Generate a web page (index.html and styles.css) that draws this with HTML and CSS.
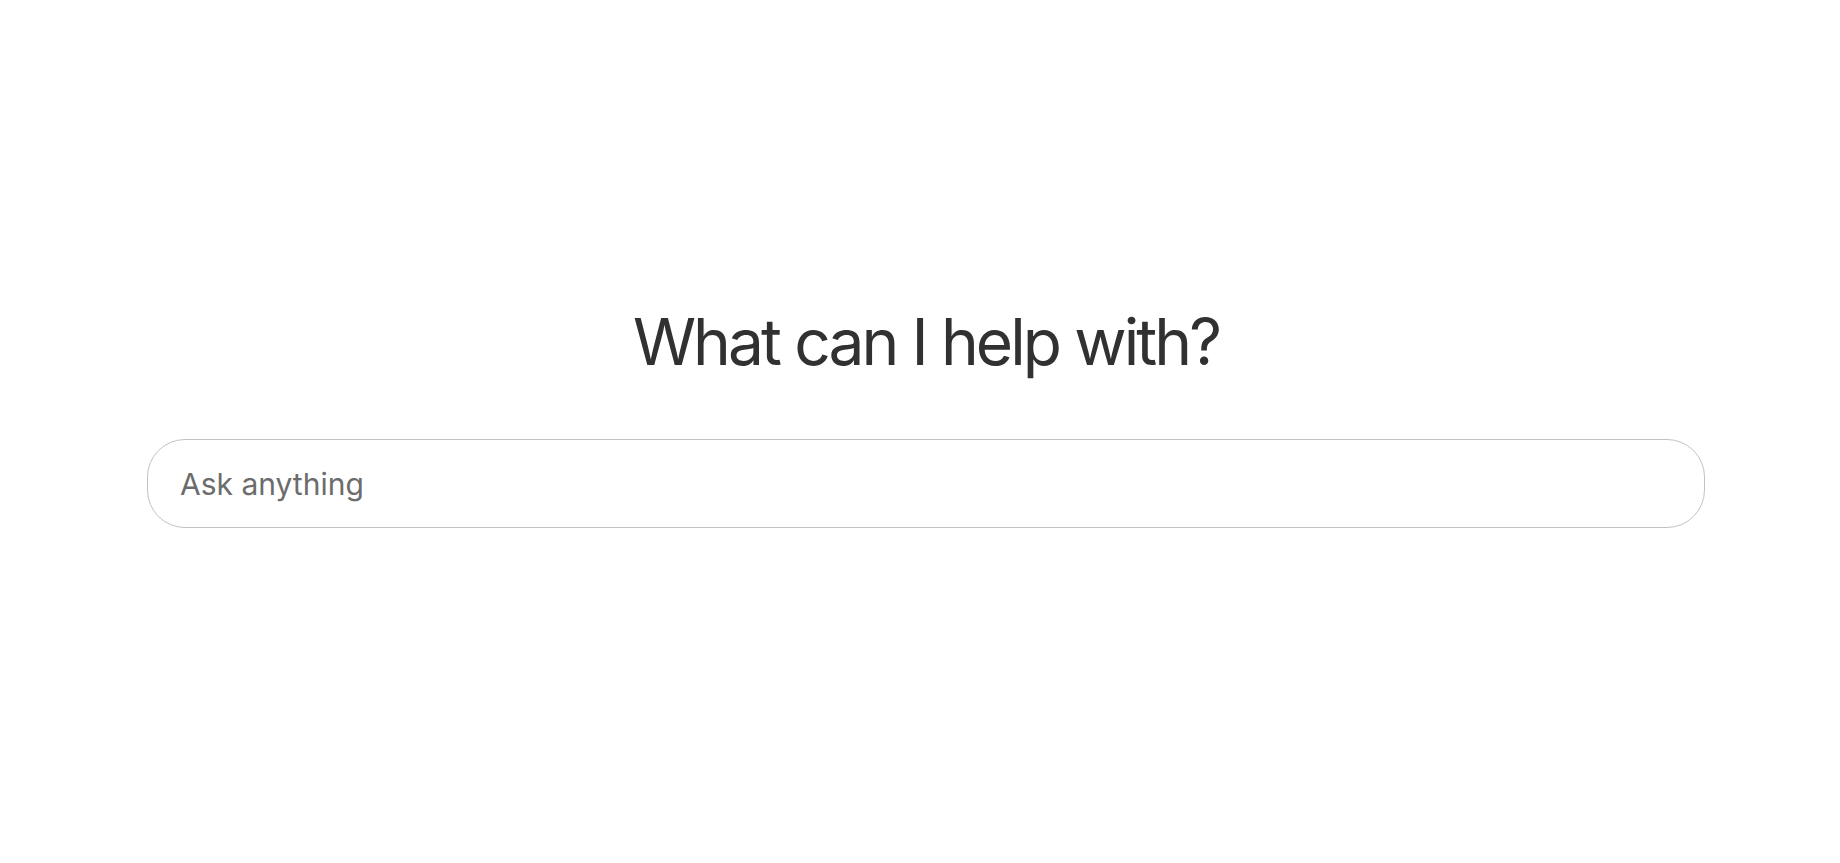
FILE: index.html
```html
<!DOCTYPE html>
<html lang="en">
<head>
<meta charset="utf-8">
<title>What can I help with?</title>
<link rel="stylesheet" href="styles.css">
</head>
<body>
<main class="page">
  <h1 class="title">What can I help with?</h1>
  <form class="ask">
    <input class="ask-input" type="text" placeholder="Ask anything">
  </form>
</main>
</body>
</html>
```

FILE: styles.css
```css
html, body {
  margin: 0;
  padding: 0;
  background: #ffffff;
}

body {
  font-family: Inter, "Liberation Sans", sans-serif;
  color: #333333;
}

.page {
  display: flex;
  flex-direction: column;
  align-items: stretch;
  padding: 310px 135px 0 147px;
}

.title {
  margin: 0;
  font-size: 64px;
  line-height: 64px;
  font-weight: 400;
  letter-spacing: -2.9px;
  text-align: center;
  color: #313131;
}

.ask {
  margin: 65px 0 0 0;
}

.ask-input {
  display: block;
  box-sizing: border-box;
  width: 100%;
  height: 89px;
  padding: 0 32px;
  border: 1px solid #c2c2c2;
  border-radius: 38px;
  background: #ffffff;
  font-family: Inter, "Liberation Sans", sans-serif;
  font-size: 30px;
  color: #333333;
  outline: none;
}

.ask-input::placeholder {
  color: #6c6c6c;
  opacity: 1;
}
```
